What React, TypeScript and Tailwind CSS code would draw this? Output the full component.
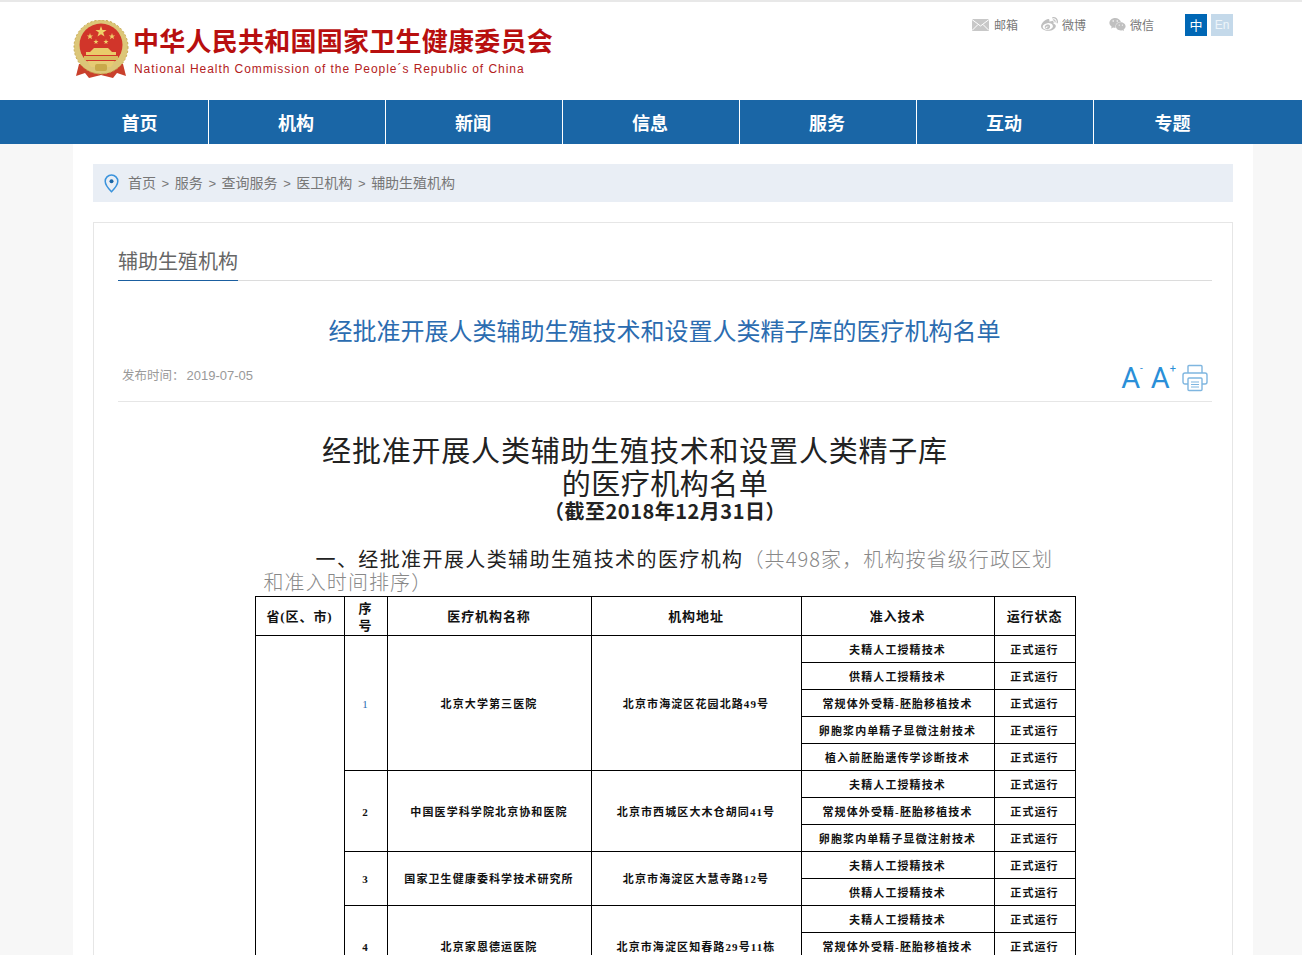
import { FaWeibo, FaWeixin } from "react-icons/fa";

const navItems = [
  { t: "首页", w: "w-[136px]" },
  { t: "机构", w: "w-[177px]" },
  { t: "新闻", w: "w-[177px]" },
  { t: "信息", w: "w-[177px]" },
  { t: "服务", w: "w-[177px]" },
  { t: "互动", w: "w-[177px]" },
  { t: "专题", w: "w-[159px]" },
];

const crumbs = ["首页", "服务", "查询服务", "医卫机构", "辅助生殖机构"];

const rows = [
  {
    no: "1",
    name: "北京大学第三医院",
    addr: "北京市海淀区花园北路49号",
    tech: ["夫精人工授精技术", "供精人工授精技术", "常规体外受精-胚胎移植技术", "卵胞浆内单精子显微注射技术", "植入前胚胎遗传学诊断技术"],
  },
  {
    no: "2",
    name: "中国医学科学院北京协和医院",
    addr: "北京市西城区大木仓胡同41号",
    tech: ["夫精人工授精技术", "常规体外受精-胚胎移植技术", "卵胞浆内单精子显微注射技术"],
  },
  {
    no: "3",
    name: "国家卫生健康委科学技术研究所",
    addr: "北京市海淀区大慧寺路12号",
    tech: ["夫精人工授精技术", "供精人工授精技术"],
  },
  {
    no: "4",
    name: "北京家恩德运医院",
    addr: "北京市海淀区知春路29号11栋",
    tech: ["夫精人工授精技术", "常规体外受精-胚胎移植技术", "卵胞浆内单精子显微注射技术"],
  },
];

function Emblem() {
  return (
    <svg width="56" height="60" viewBox="0 0 56 60" className="shrink-0">
      <path d="M6 44 L3 56 L12 53 L16 58 L28 55 L40 58 L44 53 L53 56 L50 44 Z" fill="#c9402c" />
      <circle cx="28" cy="27" r="27" fill="#dcc678" />
      <circle cx="28" cy="27" r="27" fill="none" stroke="#c4a548" strokeWidth="1" strokeDasharray="2 2" />
      <circle cx="28" cy="25" r="21.5" fill="#d1352a" />
      <polygon points="25,7 26.4,11 30.6,11 27.2,13.6 28.5,17.6 25,15.2 21.5,17.6 22.8,13.6 19.4,11 23.6,11" fill="#efd069" transform="translate(3 -1)" />
      <polygon points="17,13 17.8,15.4 20.2,15.4 18.3,16.8 19,19.2 17,17.8 15,19.2 15.7,16.8 13.8,15.4 16.2,15.4" fill="#efd069" />
      <polygon points="39,13 39.8,15.4 42.2,15.4 40.3,16.8 41,19.2 39,17.8 37,19.2 37.7,16.8 35.8,15.4 38.2,15.4" fill="#efd069" />
      <polygon points="23,19 23.6,21 25.6,21 24,22.2 24.6,24 23,22.9 21.4,24 22,22.2 20.4,21 22.4,21" fill="#efd069" />
      <polygon points="33,19 33.6,21 35.6,21 34,22.2 34.6,24 33,22.9 31.4,24 32,22.2 30.4,21 32.4,21" fill="#efd069" />
      <path d="M17 32 L21 28 H35 L39 32 Z" fill="#eacb6a" />
      <rect x="13" y="32" width="30" height="3" fill="#eacb6a" />
      <rect x="11" y="36" width="34" height="4" fill="#d9bb5e" />
      <path d="M14 41 H42 L38 47 H18 Z" fill="#e6cb74" />
      <rect x="22" y="44" width="12" height="7" rx="2" fill="#c9a94a" />
    </svg>
  );
}

function Printer() {
  return (
    <svg width="26" height="28" viewBox="0 0 26 28" fill="none" stroke="#7fb6e0" strokeWidth="1.4" strokeLinejoin="round">
      <path d="M6 9V2.5a1 1 0 0 1 1-1h12a1 1 0 0 1 1 1V9" />
      <path d="M6 20H3a2 2 0 0 1-2-2v-7a2 2 0 0 1 2-2h20a2 2 0 0 1 2 2v7a2 2 0 0 1-2 2h-3" />
      <rect x="6" y="14" width="14" height="12.5" rx="1" />
      <path d="M9 18h8M9 20.5h8M9 23h8" strokeWidth="1.1" />
    </svg>
  );
}

const cell = "border border-black p-0 pt-[1px] text-center align-middle";

export default function App() {
  return (
    <div className="h-screen overflow-hidden bg-white font-['Noto_Sans_CJK_SC',sans-serif]">
      {/* Header */}
      <header className="h-[100px] border-t-2 border-[#e8e8e8] bg-white">
        <div className="ml-[73px] flex w-[1160px] justify-between">
          <div className="mt-[18px] flex gap-[4px]">
            <Emblem />
            <div>
              <div className="mt-[3px] text-[26px] leading-[34px] font-bold tracking-[0.25px] text-[#b80f0f]">中华人民共和国国家卫生健康委员会</div>
              <div className="mt-[4px] ml-[1px] font-['Liberation_Sans',sans-serif] text-[12px] leading-[16px] tracking-[0.95px] text-[#b3201c]">National Health Commission of the People´s Republic of China</div>
            </div>
          </div>
          <div className="mt-[12px] flex h-[21px] items-center text-[12px] text-[#777]">
            <div className="flex items-center gap-[5px]">
              <svg width="17" height="12" viewBox="0 0 17 12">
                <rect width="17" height="12" fill="#c8c8c8" />
                <path d="M0 .5 8.5 7 17 .5M0 11.5 6 5.5M17 11.5 11 5.5" fill="none" stroke="#fff" strokeWidth="1" />
              </svg>
              邮箱
            </div>
            <div className="ml-[23px] flex items-center gap-[4px]">
              <FaWeibo className="text-[17px] text-[#c0c0c0]" />
              微博
            </div>
            <div className="ml-[23px] flex items-center gap-[4px]">
              <FaWeixin className="text-[17px] text-[#c0c0c0]" />
              微信
            </div>
            <div className="ml-[31px] flex h-[22px] w-[22px] items-center justify-center bg-[#0067b5] text-[13px] text-white">中</div>
            <div className="ml-[4px] flex h-[22px] w-[22px] items-center justify-center bg-[#c4d9ea] font-['Liberation_Sans',sans-serif] text-[12px] text-[#eef5fa]">En</div>
          </div>
        </div>
      </header>

      {/* Nav */}
      <nav className="h-[44px] bg-[#1a66a6]">
        <div className="ml-[73px] flex w-[1180px]">
          {navItems.map((n, i) => (
            <div
              key={n.t}
              className={`${n.w} flex h-[44px] items-center justify-center pr-[2px] text-[18px] font-bold text-white ${i < navItems.length - 1 ? "border-r border-white" : ""}`}
            >
              {n.t}
            </div>
          ))}
        </div>
      </nav>

      <div className="h-full bg-[#f7f7f7]">
        <main className="ml-[73px] h-full w-[1180px] bg-white px-[20px] pt-[20px]">
          {/* Breadcrumb */}
          <div className="flex h-[38px] items-center bg-[#e9eef5] pl-[11px] text-[#777]">
            <svg width="15" height="19" viewBox="0 0 15 19" fill="none" className="mr-[9px]">
              <path d="M7.5 1A6.3 6.3 0 0 0 1.2 7.3C1.2 11.4 7.5 17.8 7.5 17.8S13.8 11.4 13.8 7.3A6.3 6.3 0 0 0 7.5 1Z" stroke="#3a93dc" strokeWidth="1.5" />
              <circle cx="7.5" cy="7.3" r="2" fill="#1a66a6" />
            </svg>
            <span className="text-[14px]">
              {crumbs.map((c, i) => (
                <span key={c}>
                  {i > 0 && <span className="mx-[5.6px] font-['Liberation_Sans',sans-serif] text-[13px]">&gt;</span>}
                  {c}
                </span>
              ))}
            </span>
          </div>

          {/* Card */}
          <section className="mt-[20px] h-[900px] border border-[#e6e6e6] pt-[21px] pr-[20px] pl-[24px]">
            <div className="border-b border-[#dcdcdc]">
              <div className="-mb-px inline-block border-b border-[#1a5ea0] pb-[2px] text-[20px] leading-[34px] text-[#666]">辅助生殖机构</div>
            </div>
            <h1 className="mt-[31px] pr-[1px] text-center text-[24px] leading-[36px] font-normal text-[#2b6cb0]">经批准开展人类辅助生殖技术和设置人类精子库的医疗机构名单</h1>
            <div className="flex h-[54px] items-start justify-between border-b border-[#e6e6e6] pr-[4px]">
              <div className="mt-[17px] pl-[4px] text-[12.5px] leading-[20px] text-[#999]">
                发布时间：<span className="ml-[2px] font-['Liberation_Sans',sans-serif] text-[13px]">2019-07-05</span>
              </div>
              <div className="mt-[14px] flex items-start font-['Roboto',sans-serif] text-[#2a8fd8]">
                <span className="text-[29px] leading-[32px]">A</span>
                <span className="mr-[8px] text-[10px] leading-[14px]">-</span>
                <span className="text-[29px] leading-[32px]">A</span>
                <span className="mr-[6px] text-[11px] leading-[14px]">+</span>
                <span className="mt-[2px]"><Printer /></span>
              </div>
            </div>

            {/* Article */}
            <article className="mx-auto w-[821px]">
              <div className="mt-[31px] pr-[60px] text-center text-[29px] leading-[33px] tracking-[0.8px] text-[#222]">经批准开展人类辅助生殖技术和设置人类精子库</div>
              <div className="text-center text-[29px] leading-[33px] tracking-[0.5px] text-[#222]">的医疗机构名单</div>
              <div className="mt-[1px] text-center text-[20px] leading-[22px] font-bold tracking-[0.5px] text-[#222]">（截至2018年12月31日）</div>
              <p className="mt-[25px] w-[800px] pl-[9px] indent-[52px] text-[20px] leading-[23px] text-[#222]">
                <span className="tracking-[1.4px]">一、经批准开展人类辅助生殖技术的医疗机构</span>
                <span className="font-light tracking-[1.1px] text-[#888]">（共498家，机构按省级行政区划和准入时间排序）</span>
              </p>
              <table className="mt-[3px] w-[820px] table-fixed border-collapse font-['Liberation_Serif','Noto_Sans_CJK_SC',serif] text-[#111]">
                <colgroup>
                  <col className="w-[89px]" />
                  <col className="w-[43px]" />
                  <col className="w-[204px]" />
                  <col className="w-[210px]" />
                  <col className="w-[193px]" />
                  <col className="w-[81px]" />
                </colgroup>
                <thead>
                  <tr className="h-[39px] text-[13px] leading-[17px] font-bold tracking-[0.9px]">
                    <th className={cell}>省(区、市)</th>
                    <th className={cell}>序<br />号</th>
                    <th className={cell}>医疗机构名称</th>
                    <th className={cell}>机构地址</th>
                    <th className={cell}>准入技术</th>
                    <th className={cell}>运行状态</th>
                  </tr>
                </thead>
                <tbody className="text-[11px] leading-[14px] font-bold tracking-[1.1px]">
                  {rows.map((r, ri) =>
                    r.tech.map((t, i) => (
                      <tr key={r.no + t} className="h-[27px]">
                        {ri === 0 && i === 0 && <td className={cell} rowSpan={13} />}
                        {i === 0 && (
                          <td className={`${cell} ${r.no === "1" ? "font-normal text-[#2b6cb0]" : ""}`} rowSpan={r.tech.length}>{r.no}</td>
                        )}
                        {i === 0 && <td className={cell} rowSpan={r.tech.length}>{r.name}</td>}
                        {i === 0 && <td className={cell} rowSpan={r.tech.length}>{r.addr}</td>}
                        <td className={cell}>{t}</td>
                        <td className={cell}>正式运行</td>
                      </tr>
                    ))
                  )}
                </tbody>
              </table>
            </article>
          </section>
        </main>
      </div>
    </div>
  );
}
